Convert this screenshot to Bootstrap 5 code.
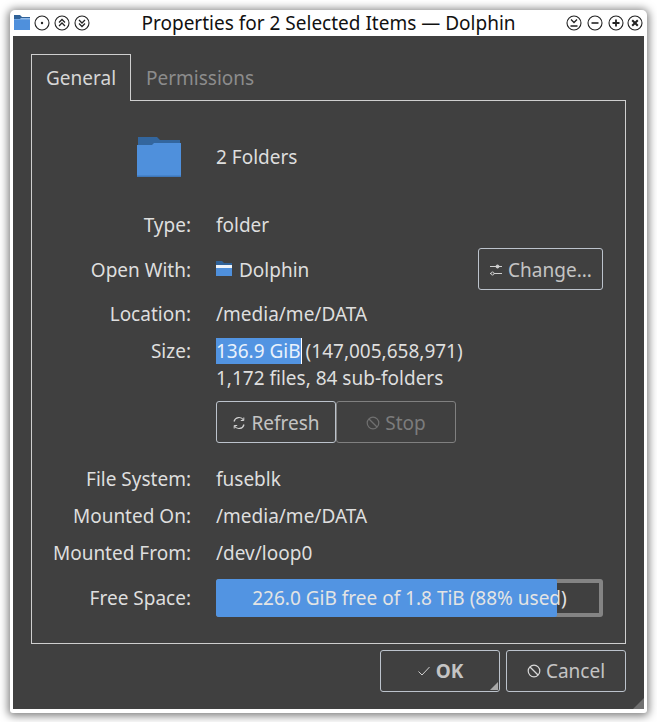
<!DOCTYPE html>
<html lang="en">
  <head>
    <meta charset="UTF-8" />
    <meta name="viewport" content="width=device-width, initial-scale=1.0" />
    <title>Properties for 2 Selected Items — Dolphin</title>
    <link href="https://cdn.jsdelivr.net/npm/bootstrap@5.3.0/dist/css/bootstrap.min.css" rel="stylesheet" />
    <style>
      html,
      body {
        height: 722px;
      }
      body {
        background: #fff;
        font-family: "Noto Sans", sans-serif;
        font-size: 19px;
        color: #dedede;
        padding: 10px 0 0 10px;
        overflow: hidden;
      }
      .win {
        width: 637px;
        height: 703px;
        background: #fff;
        border-radius: 5px 5px 3px 3px;
        box-shadow: 0 1px 9px 2px rgba(0, 0, 0, 0.5);
        padding: 0 3px 3px 3px;
        position: relative;
      }
      .titlebar {
        height: 26px;
        color: #111;
        line-height: 26px;
      }
      .tb-side {
        flex: 1 1 0;
      }
      .tb-left {
        gap: 4px;
        padding-left: 1px;
      }
      .tb-right {
        gap: 5px;
        padding-right: 1px;
      }
      .tb-btn {
        width: 16px;
        height: 16px;
        display: block;
      }
      .tb-last {
        margin-left: -2px;
      }
      .win-body {
        background: #404040;
        height: 673px;
        padding: 18px 18px 0 18px;
        position: relative;
      }
      .nav-tabs.prop-tabs {
        border: 0;
        height: 47px;
      }
      .prop-tabs .nav-link {
        font-size: 19px;
        line-height: 24px;
        padding: 12px 15px 10px;
        border: 0;
        background: transparent;
        color: #8c8c8c;
        border-radius: 0;
      }
      .prop-tabs .nav-link.active {
        background: #404040;
        color: #d6d6d6;
        border: 1px solid #cfcfcf;
        border-bottom: 0;
        height: 47px;
        width: 100px;
        padding: 11px 14px;
        position: relative;
        z-index: 1;
      }
      .tab-pane-box {
        border: 1px solid #cfcfcf;
        height: 544px;
        margin-top: -1px;
        padding: 32px 22px 0 0;
      }
      .prop-label {
        width: 159px;
        text-align: right;
        flex: none;
        margin-right: 25px;
      }
      .prop-row {
        display: flex;
        align-items: center;
        height: 26px;
        line-height: 26px;
        margin-top: 11px;
      }
      .row-head {
        height: 48px;
        margin-top: 0;
      }
      .head-icon {
        width: 159px;
        margin-right: 25px;
        flex: none;
        padding-left: 105px;
      }
      .row-type {
        margin-top: 31px;
      }
      .row-open {
        height: 42px;
        margin-top: 10px;
      }
      .open-app {
        gap: 7px;
      }
      .open-text {
        padding-top: 2px;
      }
      .row-files {
        margin-top: 1px;
      }
      .row-actions {
        height: 42px;
        margin-top: 10px;
      }
      .row-fs {
        margin-top: 23px;
      }
      .row-free {
        height: 38px;
        margin-top: 13px;
      }
      .sel-text {
        background: #5294e2;
        color: #eaf2fc;
        border-right: 1px solid #fff;
        display: inline-block;
        height: 26px;
        margin-right: 4px;
      }
      .kde-btn {
        height: 42px;
        font-size: 19px;
        line-height: 24px;
        color: #c4c4c4;
        background: transparent;
        border: 1px solid #bcc3cc;
        border-radius: 3px;
        padding: 0;
        display: flex;
        align-items: center;
        justify-content: center;
        gap: 5px;
      }
      .kde-btn:disabled {
        color: #7c7c7c;
        border-color: #808080;
        opacity: 1;
      }
      .btn-lower {
        padding-top: 2px;
      }
      .btn-change {
        width: 125px;
      }
      .btn-refresh {
        width: 120px;
      }
      .btn-ok {
        width: 120px;
        position: relative;
      }
      .btn-ok b {
        font-weight: 700;
      }
      .btn-cancel {
        width: 120px;
      }
      .ok-corner {
        position: absolute;
        right: 1px;
        bottom: 1px;
        width: 0;
        height: 0;
        border-style: solid;
        border-width: 0 0 8px 8px;
        border-color: transparent transparent #a8a8a8 transparent;
      }
      .free-bar.progress {
        width: 387px;
        height: 38px;
        font-size: 19px;
        background: transparent;
        box-shadow: inset 0 0 0 4px #848484;
        border-radius: 3px;
        overflow: visible;
        position: relative;
      }
      .free-bar .progress-bar {
        background: #5294e2;
        height: 38px;
        border-radius: 3px 2px 2px 3px;
      }
      .free-text {
        position: absolute;
        left: 0;
        right: 0;
        top: 0;
        line-height: 38px;
        text-align: center;
        color: #e4e4e4;
      }
      .dlg-buttons {
        margin-top: 6px;
        gap: 6px;
      }
      .grip {
        position: absolute;
        right: 0;
        bottom: 0;
        width: 0;
        height: 0;
        border-style: solid;
        border-width: 0 0 11px 11px;
        border-color: transparent transparent #6f6f6f transparent;
      }
    </style>
  </head>
  <body>
    <div class="win">
      <div class="titlebar d-flex align-items-center">
        <div class="tb-side tb-left d-flex align-items-center">
          <svg width="16" height="16" viewBox="0 0 16 16" class="d-block">
            <path d="M0 0h6l2 2h8v3H0z" fill="#2f6299" />
            <path d="M0 4h6l1-1h9v12H0z" fill="#4f90dc" />
            <path d="M0 4h6l1-1h9v1.500H0z" fill="#d9e8f8" opacity=".5" />
          </svg>
          <svg class="tb-btn" viewBox="0 0 16 16" fill="none" stroke="#222" stroke-width="1.100"><circle cx="8" cy="8" r="7" /><circle cx="8" cy="8" r="1.200" fill="#222" stroke="none" /></svg>
          <svg class="tb-btn" viewBox="0 0 16 16" fill="none" stroke="#222" stroke-width="1.100"><circle cx="8" cy="8" r="7" /><path d="M5 7.500l3-3 3 3M5 11l3-3 3 3" stroke-width="1.300" /></svg>
          <svg class="tb-btn" viewBox="0 0 16 16" fill="none" stroke="#222" stroke-width="1.100"><circle cx="8" cy="8" r="7" /><path d="M5 5l3 3 3-3M5 8.500l3 3 3-3" stroke-width="1.300" /></svg>
        </div>
        <div class="text-nowrap">Properties for 2 Selected Items — Dolphin</div>
        <div class="tb-side tb-right d-flex align-items-center justify-content-end">
          <svg class="tb-btn" viewBox="0 0 16 16" fill="none" stroke="#222" stroke-width="1.100"><circle cx="8" cy="8" r="7" /><path d="M5 4.500l3 3 3-3M4.500 11h7" stroke-width="1.300" /></svg>
          <svg class="tb-btn" viewBox="0 0 16 16" fill="none" stroke="#222" stroke-width="1.100"><circle cx="8" cy="8" r="7" /><path d="M4.500 8h7" stroke-width="1.600" /></svg>
          <svg class="tb-btn" viewBox="0 0 16 16" fill="none" stroke="#222" stroke-width="1.100"><circle cx="8" cy="8" r="7" /><path d="M4.500 8h7M8 4.500v7" stroke-width="1.800" /></svg>
          <svg class="tb-btn tb-last" viewBox="0 0 16 16" fill="none" stroke="#222" stroke-width="1.100"><circle cx="8" cy="8" r="7" /><path d="M5.200 5.200l5.600 5.600M10.800 5.200l-5.600 5.600" stroke-width="2" /></svg>
        </div>
      </div>
      <div class="win-body">
        <ul class="nav nav-tabs prop-tabs">
          <li class="nav-item"><a class="nav-link active" href="#">General</a></li>
          <li class="nav-item"><a class="nav-link" href="#">Permissions</a></li>
        </ul>
        <div class="tab-pane-box">
          <div class="prop-row row-head">
            <div class="head-icon">
              <svg width="44" height="40" viewBox="0 0 44 40" class="d-block">
                <path d="M1 0h19l3 3h20v12H1z" fill="#33669e" />
                <path d="M0 8h15l2-2h27v34H0z" fill="#4f90dc" />
                <path d="M0 38.500h44V40H0z" fill="#3f78bb" />
              </svg>
            </div>
            <div>2 Folders</div>
          </div>
          <div class="prop-row row-type">
            <div class="prop-label">Type:</div>
            <div>folder</div>
          </div>
          <div class="prop-row row-open">
            <div class="prop-label open-text">Open With:</div>
            <div class="open-app d-flex align-items-center flex-grow-1">
              <svg width="16" height="16" viewBox="0 0 16 16" class="d-block">
                <path d="M0 0h6l2 2h8v3H0z" fill="#2f6299" />
                <path d="M0 4h16v3H0z" fill="#eef4fb" />
                <path d="M0 7h16v8H0z" fill="#4f90dc" />
              </svg>
              <span class="open-text">Dolphin</span>
            </div>
            <button class="btn kde-btn btn-lower btn-change" type="button">
              <svg width="14" height="14" viewBox="0 0 14 14" fill="none" stroke="#d0d0d0" stroke-width="1"><path d="M1 3.500h12M1 10.500h12" /><circle cx="8.500" cy="3.500" r="1.500" fill="#d0d0d0" /><circle cx="3.500" cy="10.500" r="1.500" fill="#404040" /></svg>
              Change...
            </button>
          </div>
          <div class="prop-row">
            <div class="prop-label">Location:</div>
            <div>/media/me/DATA</div>
          </div>
          <div class="prop-row">
            <div class="prop-label">Size:</div>
            <div class="text-nowrap"><span class="sel-text">136.9 GiB</span>(147,005,658,971)</div>
          </div>
          <div class="prop-row row-files">
            <div class="prop-label"></div>
            <div>1,172 files, 84 sub-folders</div>
          </div>
          <div class="prop-row row-actions">
            <div class="prop-label"></div>
            <button class="btn kde-btn btn-lower btn-refresh" type="button">
              <svg width="14" height="14" viewBox="0 0 14 14" fill="none" stroke="#d0d0d0" stroke-width="1.200"><path d="M2 5.500A5.200 5.200 0 0 1 11.500 4M12 8.500A5.200 5.200 0 0 1 2.500 10" /><path d="M11.800 1.500v3h-3M2.200 12.500v-3h3" stroke-width="1" /></svg>
              Refresh
            </button>
            <button class="btn kde-btn btn-lower btn-refresh" type="button" disabled>
              <svg width="14" height="14" viewBox="0 0 14 14" fill="none" stroke="#707070" stroke-width="1.200"><circle cx="7" cy="7" r="5.800" /><path d="M3 3l8 8" /></svg>
              Stop
            </button>
          </div>
          <div class="prop-row row-fs">
            <div class="prop-label">File System:</div>
            <div>fuseblk</div>
          </div>
          <div class="prop-row">
            <div class="prop-label">Mounted On:</div>
            <div>/media/me/DATA</div>
          </div>
          <div class="prop-row">
            <div class="prop-label">Mounted From:</div>
            <div>/dev/loop0</div>
          </div>
          <div class="prop-row row-free">
            <div class="prop-label">Free Space:</div>
            <div class="progress free-bar">
              <div class="progress-bar" style="width: 88%"></div>
              <div class="free-text">226.0 GiB free of 1.8 TiB (88% used)</div>
            </div>
          </div>
        </div>
        <div class="d-flex justify-content-end dlg-buttons">
          <button class="btn kde-btn btn-ok" type="button">
            <svg width="14" height="14" viewBox="0 0 14 14" fill="none" stroke="#d0d0d0" stroke-width="1"><path d="M1.500 7.500l3.500 3.500 7.500-8" /></svg>
            <b>OK</b>
            <span class="ok-corner"></span>
          </button>
          <button class="btn kde-btn btn-cancel" type="button">
            <svg width="14" height="14" viewBox="0 0 14 14" fill="none" stroke="#d8d8d8" stroke-width="1.200"><circle cx="7" cy="7" r="5.800" /><path d="M3 3l8 8" /></svg>
            Cancel
          </button>
        </div>
        <span class="grip"></span>
      </div>
    </div>
    <script src="https://cdn.jsdelivr.net/npm/bootstrap@5.3.0/dist/js/bootstrap.bundle.min.js"></script>
  </body>
</html>
